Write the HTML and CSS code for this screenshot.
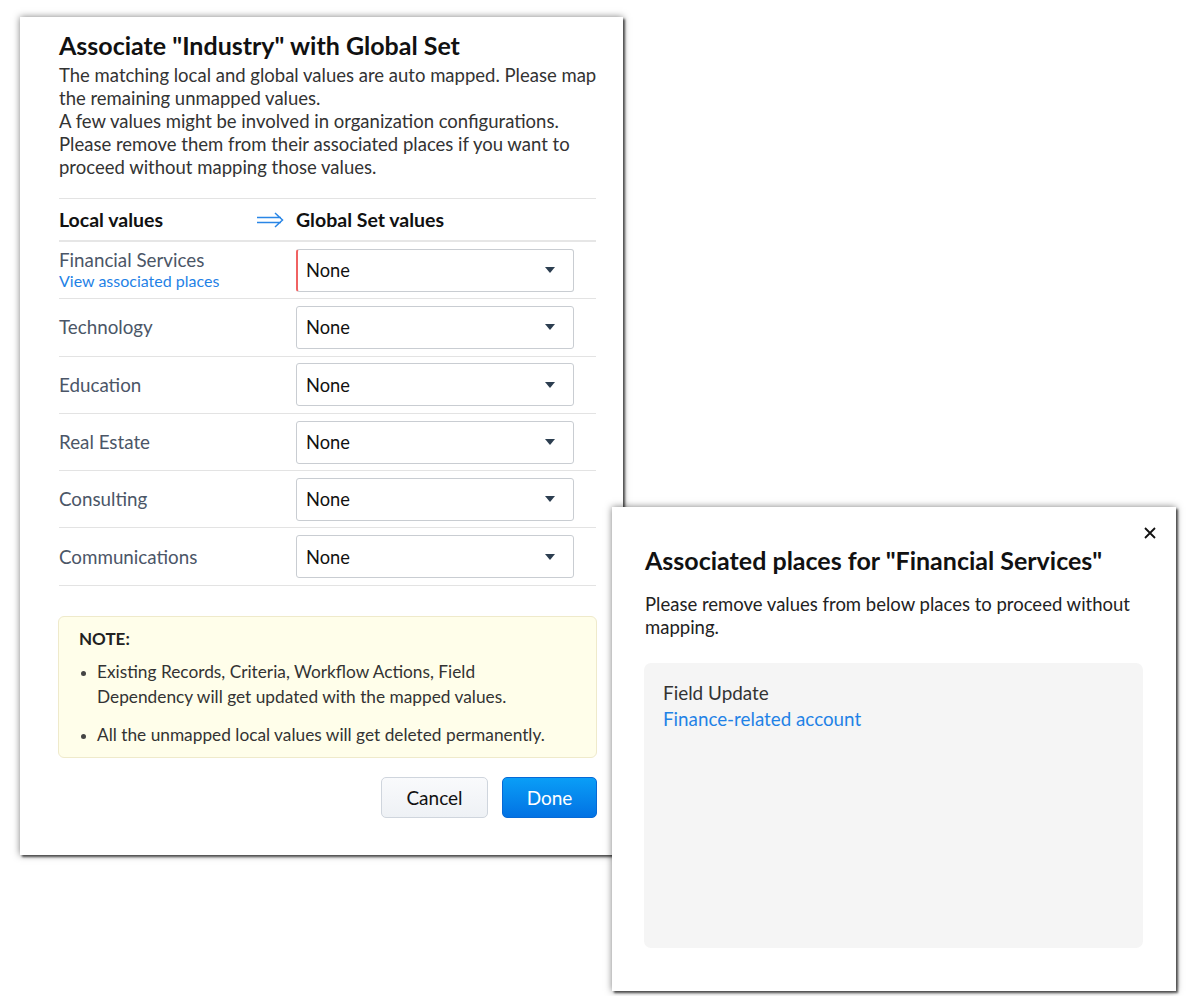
FILE: index.html
```html
<!DOCTYPE html>
<html>
<head>
<meta charset="utf-8">
<link rel="stylesheet" href="styles.css">
</head>
<body>
<div class="dialog dialog-main">
  <h1 class="title">Associate "Industry" with Global Set</h1>
  <p class="desc">The matching local and global values are auto mapped. Please map the remaining unmapped values.<br>A few values might be involved in organization configurations. Please remove them from their associated places if you want to proceed without mapping those values.</p>
  <div class="table">
    <div class="thead">
      <div class="col-local">Local values</div>
      <svg class="arrow" width="28" height="16" viewBox="0 0 28 16"><path d="M1 5.5H25M1 10.5H25M19 1L26.5 8L19 15" fill="none" stroke="#2a86e6" stroke-width="1.5"/></svg>
      <div class="col-global">Global Set values</div>
    </div>
    <div class="row row-first">
      <div class="col-local"><div class="name">Financial Services</div><a class="link small">View associated places</a></div>
      <div class="select error"><span>None</span><i class="caret"></i></div>
    </div>
    <div class="row">
      <div class="col-local"><div class="name">Technology</div></div>
      <div class="select"><span>None</span><i class="caret"></i></div>
    </div>
    <div class="row">
      <div class="col-local"><div class="name">Education</div></div>
      <div class="select"><span>None</span><i class="caret"></i></div>
    </div>
    <div class="row">
      <div class="col-local"><div class="name">Real Estate</div></div>
      <div class="select"><span>None</span><i class="caret"></i></div>
    </div>
    <div class="row">
      <div class="col-local"><div class="name">Consulting</div></div>
      <div class="select"><span>None</span><i class="caret"></i></div>
    </div>
    <div class="row">
      <div class="col-local"><div class="name">Communications</div></div>
      <div class="select"><span>None</span><i class="caret"></i></div>
    </div>
  </div>
  <div class="note">
    <div class="note-title">NOTE:</div>
    <ul class="note-list">
      <li>Existing Records, Criteria, Workflow Actions, Field Dependency will get updated with the mapped values.</li>
      <li>All the unmapped local values will get deleted permanently.</li>
    </ul>
  </div>
  <div class="actions">
    <button class="btn btn-cancel">Cancel</button>
    <button class="btn btn-done">Done</button>
  </div>
</div>

<div class="dialog dialog-places">
  <div class="close">
    <svg width="12" height="12" viewBox="0 0 12 12"><path d="M1 1L11 11M11 1L1 11" stroke="#111" stroke-width="1.8"/></svg>
  </div>
  <h2 class="title2">Associated places for "Financial Services"</h2>
  <p class="desc2">Please remove values from below places to proceed without mapping.</p>
  <div class="places">
    <div class="place-type">Field Update</div>
    <a class="link place-link">Finance-related account</a>
  </div>
</div>
</body>
</html>
```
FILE: styles.css
```css
* { box-sizing: border-box; }
html, body { margin: 0; padding: 0; background: #fff; }
body {
  width: 1190px;
  height: 996px;
  position: relative;
  overflow: hidden;
  font-family: Lato, "Open Sans", sans-serif;
  color: #222;
}
.dialog {
  position: absolute;
  background: #fff;
  box-shadow: 2px 2px 2px rgba(0,0,0,0.6), 0 0 7px rgba(0,0,0,0.5);
}
.dialog-main {
  left: 20px;
  top: 17px;
  width: 603px;
  height: 838px;
  padding: 13px 27px 0 39px;
}
.title {
  margin: 0;
  font-size: 25px;
  line-height: 30px;
  font-weight: 700;
  color: #111;
}
.desc {
  margin: 4px -8px 0 0;
  font-size: 18.5px;
  line-height: 23px;
  color: #333;
}
.table {
  margin-top: 19px;
  border-top: 1px solid #e3e3e3;
}
.thead {
  display: flex;
  align-items: center;
  height: 43px;
  border-bottom: 2px solid #e6e6e6;
  font-size: 19.5px;
  font-weight: 700;
  color: #111;
}
.thead .col-local { width: 197px; }
.arrow { margin-right: 12px; }
.col-local { width: 237px; flex: none; }
.row {
  display: flex;
  align-items: center;
  height: 57.3px;
  border-bottom: 1px solid #e3e3e3;
}
.name {
  font-size: 18.8px;
  line-height: 22px;
  color: #4b5667;
}
.link { color: #1f82e6; text-decoration: none; }
.small { font-size: 16px; line-height: 20px; display: block; }
.select {
  width: 278px;
  height: 43px;
  border: 1px solid #c9cdd2;
  border-radius: 3px;
  display: flex;
  align-items: center;
  justify-content: space-between;
  padding: 0 18px 0 9px;
  font-size: 18.3px;
  color: #111;
}
.select.error { border-left: 2px solid #f06262; padding-left: 8px; }
.caret {
  width: 0; height: 0;
  border-left: 5px solid transparent;
  border-right: 5px solid transparent;
  border-top: 6px solid #2c3e50;
}
.note {
  margin-top: 30px;
  margin-left: -1px;
  width: 539px;
  background: #fffeea;
  border: 1px solid #efeacb;
  border-radius: 6px;
  padding: 11px 40px 10px 20px;
}
.note-title {
  font-size: 17px;
  font-weight: 700;
  color: #222;
  line-height: 22px;
}
.note-list {
  margin: 9px 0 0;
  padding-left: 18px;
  font-size: 17.3px;
  line-height: 25px;
  color: #333;
}
.note-list li { margin-bottom: 13px; }
.note-list li:last-child { margin-bottom: 0; }
.note-list li::marker { color: #444; font-size: 14px; }
.actions {
  margin-top: 19px;
  display: flex;
  justify-content: flex-end;
  gap: 14px;
  width: 538px;
}
.btn {
  height: 41px;
  border-radius: 5px;
  font-family: Lato, "Open Sans", sans-serif;
  font-size: 19px;
  cursor: pointer;
}
.btn-cancel {
  width: 107px;
  background: linear-gradient(#f9fafc, #eef1f5);
  border: 1px solid #cfd5dd;
  color: #111;
}
.btn-done {
  width: 95px;
  background: linear-gradient(#0a9ef7, #0272e3);
  border: 1px solid #0669d6;
  color: #fff;
}
.dialog-places {
  left: 612px;
  top: 507px;
  width: 564px;
  height: 484px;
  padding: 38px 33px 0 33px;
}
.close {
  position: absolute;
  right: 20px;
  top: 20px;
  width: 12px;
  height: 12px;
  display: flex;
}
.title2 {
  margin: 0;
  font-size: 25px;
  line-height: 30px;
  font-weight: 700;
  color: #111;
}
.desc2 {
  margin: 18px 0 0;
  font-size: 18.5px;
  line-height: 23px;
  color: #222;
}
.places {
  margin-top: 24px;
  margin-left: -1px;
  height: 285px;
  background: #f5f5f5;
  border-radius: 7px;
  padding: 17px 19px;
}
.place-type { font-size: 18.9px; line-height: 25px; color: #333; }
.place-link { display: block; font-size: 18.8px; line-height: 27px; }
```
